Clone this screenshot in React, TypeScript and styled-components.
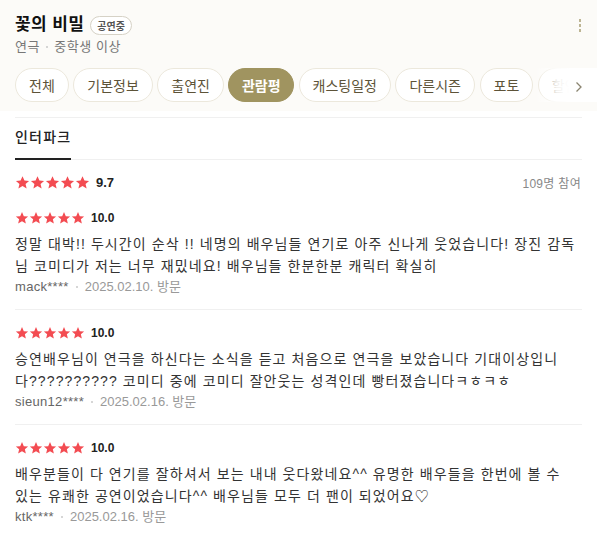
import React from "react";
import styled, { createGlobalStyle } from "styled-components";

const Global = createGlobalStyle`
  html, body { margin: 0; padding: 0; background: #fff; }
  body { font-family: "Liberation Sans", "Noto Sans CJK KR", sans-serif; color: #222; }
  * { box-sizing: border-box; }
`;

const Page = styled.div`
  width: 597px;
  height: 536px;
  overflow: hidden;
  background: #fff;
`;

const Header = styled.div`
  background: #fcfbf8;
  padding: 13px 15px 9px 15px;
`;

const TitleRow = styled.div`
  display: flex;
  align-items: center;
  justify-content: space-between;
`;

const TitleLeft = styled.div`
  display: flex;
  align-items: center;
  gap: 6px;
`;

const Title = styled.h1`
  margin: 0;
  font-size: 17px;
  font-weight: 700;
  color: #111;
  line-height: 24px;
  letter-spacing: 0.4px;
`;

const Badge = styled.span`
  display: inline-flex;
  align-items: center;
  height: 19px;
  padding: 0 6px;
  border: 1px solid #d6d2c6;
  border-radius: 10px;
  font-size: 10px;
  font-weight: 700;
  color: #555;
  background: #fff;
`;

const Kebab = styled.div`
  display: flex;
  flex-direction: column;
  gap: 2px;
  margin-right: 1px;
  & > span {
    width: 2px;
    height: 3px;
    background: #bdb594;
  }
`;

const Sub = styled.div`
  margin-top: 1px;
  font-size: 13px;
  line-height: 18px;
  color: #777;
  display: flex;
  align-items: center;
  gap: 6px;
  letter-spacing: 0.6px;
`;

const Dot = styled.span`
  width: 2px;
  height: 2px;
  border-radius: 50%;
  background: #c8c8c8;
`;

const TabsWrap = styled.div`
  position: relative;
  margin-top: 12px;
  margin-right: -15px;
  overflow: hidden;
`;

const Tabs = styled.div`
  display: flex;
  gap: 4.5px;
  white-space: nowrap;
`;

const Tab = styled.div<{ $active?: boolean }>`
  flex: none;
  height: 34px;
  padding: 0 ${(p) => (p.$active ? 12.5 : 13)}px;
  border-radius: 17px;
  display: flex;
  align-items: center;
  font-size: 14px;
  font-weight: ${(p) => (p.$active ? 700 : 400)};
  color: ${(p) => (p.$active ? "#fff" : "#5d5338")};
  background: ${(p) => (p.$active ? "#a09460" : "#fff")};
  border: 1px solid ${(p) => (p.$active ? "#a09460" : "#ece8dc")};
`;

const Fade = styled.div`
  position: absolute;
  right: 0;
  top: 0;
  bottom: 0;
  width: 62px;
  background: linear-gradient(to right, rgba(255,255,255,0) 0%, rgba(255,255,255,0.9) 35%, #fff 55%);
  display: flex;
  align-items: center;
  justify-content: flex-end;
  padding-right: 14px;
  padding-top: 4px;
`;

const Body = styled.div`
  padding: 6px 15px 0 15px;
`;

const SourceBar = styled.div`
  border-top: 1px solid #f0f0f0;
  border-bottom: 1px solid #f0f0f0;
  display: flex;
`;

const SourceTab = styled.div`
  padding: 9px 0 11px 0;
  font-size: 14px;
  font-weight: 500;
  color: #222;
  border-bottom: 2px solid #222;
  margin-bottom: -1px;
  line-height: 20px;
  letter-spacing: 1.2px;
`;

const Summary = styled.div`
  display: flex;
  align-items: center;
  justify-content: space-between;
  margin: 14px 0 4px 0;
`;

const StarRow = styled.div`
  display: flex;
  align-items: center;
  gap: 6px;
`;

const Stars = styled.div`
  display: flex;
`;

const Score = styled.span<{ $size: number }>`
  font-size: ${(p) => p.$size}px;
  font-weight: 700;
  color: #222;
`;

const Count = styled.span`
  font-size: 12px;
  color: #888;
  margin-right: 1px;
  letter-spacing: 0.3px;
`;

const Review = styled.div<{ $last?: boolean }>`
  padding: 16px 0 12px 0;
  border-bottom: ${(p) => (p.$last ? "none" : "1px solid #f0f0f0")};
`;

const ReviewText = styled.p`
  margin: 8px 0 0 0;
  padding-right: 4px;
  font-size: 14px;
  line-height: 22px;
  color: #333;
  letter-spacing: 1.1px;
`;

const Meta = styled.div`
  display: flex;
  align-items: center;
  gap: 7px;
  font-size: 13px;
  color: #999;
  line-height: 20px;
`;

const User = styled.span`
  color: #666;
  letter-spacing: 0.3px;
`;

const Star = ({ size }: { size: number }) => (
  <svg width={size} height={size} viewBox="0 0 24 24">
    <path
      d="M12 1.8l3.1 7 7.4.6-5.6 4.9 1.7 7.3L12 17.7l-6.6 3.9 1.7-7.3L1.5 9.4l7.4-.6z"
      fill="#f34c52"
    />
  </svg>
);

const FiveStars = ({ size }: { size: number }) => (
  <Stars>
    {[0, 1, 2, 3, 4].map((i) => (
      <Star key={i} size={size} />
    ))}
  </Stars>
);

const reviews = [
  {
    text: "정말 대박!! 두시간이 순삭 !! 네명의 배우님들 연기로 아주 신나게 웃었습니다! 장진 감독님 코미디가 저는 너무 재밌네요! 배우님들 한분한분 캐릭터 확실히",
    user: "mack****",
    date: "2025.02.10. 방문",
  },
  {
    text: "승연배우님이 연극을 하신다는 소식을 듣고 처음으로 연극을 보았습니다 기대이상입니다?????????? 코미디 중에 코미디 잘안웃는 성격인데 빵터졌습니다ㅋㅎㅋㅎ",
    user: "sieun12****",
    date: "2025.02.16. 방문",
  },
  {
    text: "배우분들이 다 연기를 잘하셔서 보는 내내 웃다왔네요^^ 유명한 배우들을 한번에 볼 수 있는 유쾌한 공연이었습니다^^ 배우님들 모두 더 팬이 되었어요♡",
    user: "ktk****",
    date: "2025.02.16. 방문",
  },
];

const tabs = ["전체", "기본정보", "출연진", "관람평", "캐스팅일정", "다른시즌", "포토", "할인정보"];

export default function App() {
  return (
    <Page>
      <Global />
      <Header>
        <TitleRow>
          <TitleLeft>
            <Title>꽃의 비밀</Title>
            <Badge>공연중</Badge>
          </TitleLeft>
          <Kebab>
            <span />
            <span />
            <span />
          </Kebab>
        </TitleRow>
        <Sub>
          연극 <Dot /> 중학생 이상
        </Sub>
        <TabsWrap>
          <Tabs>
            {tabs.map((t) => (
              <Tab key={t} $active={t === "관람평"}>
                {t}
              </Tab>
            ))}
          </Tabs>
          <Fade>
            <svg width="8" height="12" viewBox="0 0 8 12">
              <path d="M1.5 1.5L6 6l-4.5 4.5" fill="none" stroke="#8a8470" strokeWidth="1.3" />
            </svg>
          </Fade>
        </TabsWrap>
      </Header>
      <Body>
        <SourceBar>
          <SourceTab>인터파크</SourceTab>
        </SourceBar>
        <Summary>
          <StarRow>
            <FiveStars size={15} />
            <Score $size={13}>9.7</Score>
          </StarRow>
          <Count>109명 참여</Count>
        </Summary>
        {reviews.map((r, i) => (
          <Review key={i} $last={i === reviews.length - 1}>
            <StarRow>
              <FiveStars size={14} />
              <Score $size={12}>10.0</Score>
            </StarRow>
            <ReviewText>{r.text}</ReviewText>
            <Meta>
              <User>{r.user}</User>
              <Dot />
              <span>{r.date}</span>
            </Meta>
          </Review>
        ))}
      </Body>
    </Page>
  );
}
